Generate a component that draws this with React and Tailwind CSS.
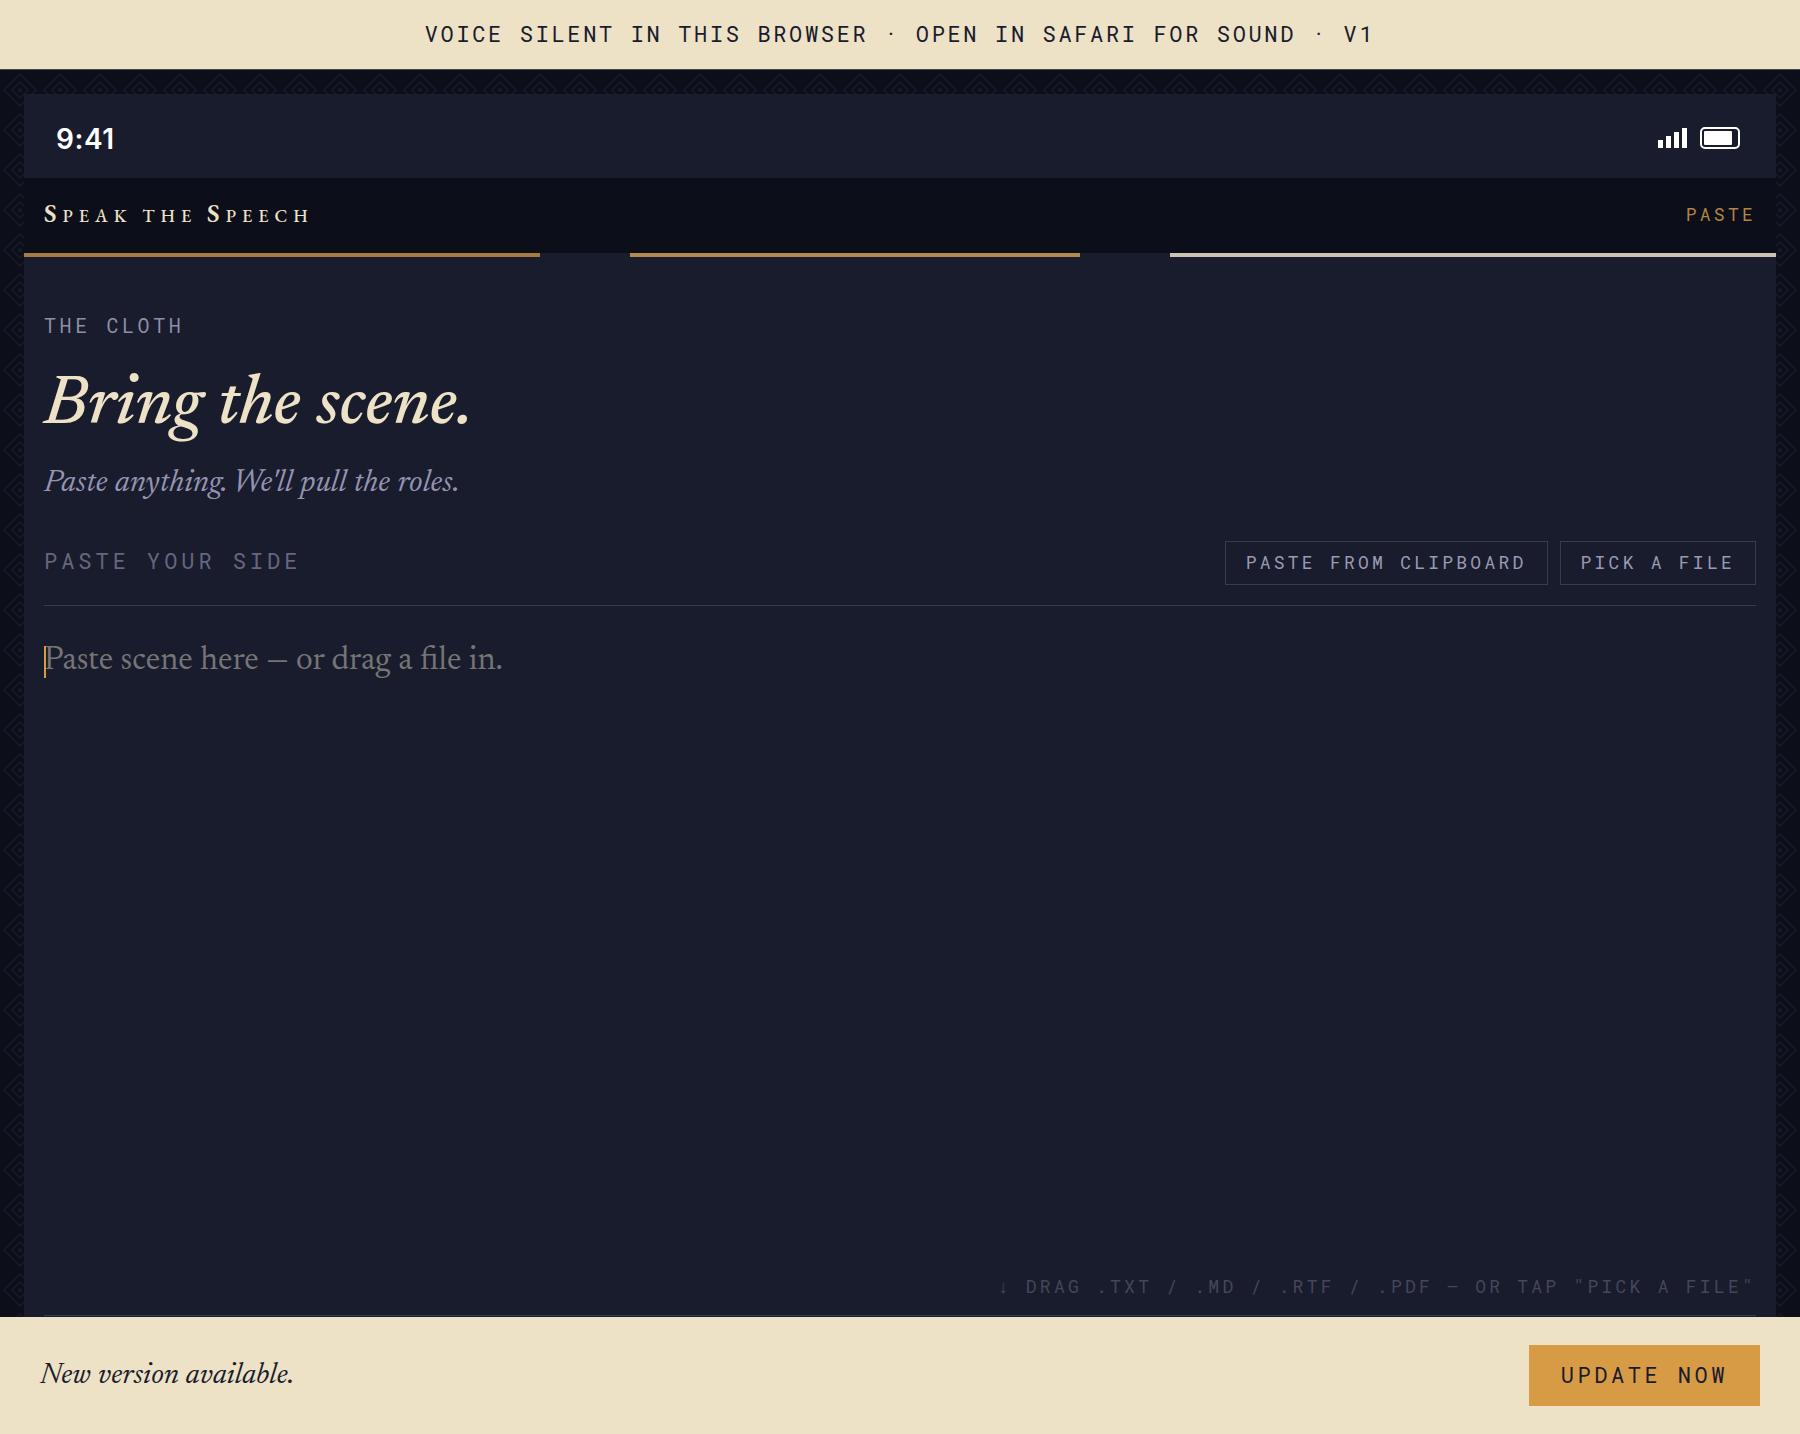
import { useState } from "react";

const MONO = "font-['Roboto_Mono','Liberation_Mono',monospace]";
const SERIF = "font-['Newsreader','Liberation_Serif',serif]";
const DISPLAY = "font-['EB_Garamond','Liberation_Serif',serif]";

function DiamondPattern() {
  return (
    <svg aria-hidden="true" className="absolute inset-0 w-full h-full">
      <defs>
        <pattern id="diamonds" width="40" height="40" patternUnits="userSpaceOnUse">
          <g fill="none" stroke="#181a28">
            <path d="M20 4 36 20 20 36 4 20Z" strokeWidth="1.5" />
            <path d="M20 12 28 20 20 28 12 20Z" strokeWidth="1.5" />
          </g>
          <circle cx="20" cy="20" r="2" fill="#181a28" />
        </pattern>
      </defs>
      <rect width="100%" height="100%" fill="url(#diamonds)" />
    </svg>
  );
}

function StatusBar() {
  return (
    <div className="h-[84px] pl-8 pr-9 pt-1 flex items-center justify-between text-white">
      <span className="pt-0.5 font-['Inter',sans-serif] font-semibold text-[28px] leading-8 tracking-[0.02em]">
        9:41
      </span>
      <svg width="82" height="22" viewBox="0 0 82 22" fill="currentColor" aria-hidden="true">
        <path d="M0 13h5v8H0zM8 9h5v12H8zM16 5h5v16h-5zM24 1h5v20h-5z" />
        <rect x="43" y="1" width="38" height="20" rx="4" fill="none" stroke="currentColor" strokeWidth="2" />
        <rect x="46" y="4" width="28" height="14" rx="1" />
      </svg>
    </div>
  );
}

function Wordmark() {
  return (
    <span
      className={`${DISPLAY} pb-0.5 font-medium text-[18px] leading-8 tracking-[6px] uppercase text-[#ede1c6]`}
    >
      <span className="text-[26px] font-semibold">S</span>peak the{" "}
      <span className="text-[26px] font-semibold">S</span>peech
    </span>
  );
}

function Selvedge() {
  return (
    <div className="h-1 grid grid-cols-[516fr_90fr_450fr_90fr_606fr]">
      <div className="bg-[#a47c43]" />
      <div />
      <div className="bg-[#b28a50]" />
      <div />
      <div className="bg-[#cac3b2]" />
    </div>
  );
}

function GhostButton({ children }) {
  return (
    <button
      type="button"
      className={`${MONO} h-11 px-5 pb-0.5 border border-[#3a3c4e] text-[18px] leading-6 tracking-[0.18em] uppercase text-[#9a9ab4] hover:text-[#ede1c6]`}
    >
      {children}
    </button>
  );
}

export default function App() {
  const [scene, setScene] = useState("");

  return (
    <div className="min-h-screen flex flex-col bg-[#0c0e1a]">
      <div
        role="status"
        className={`${MONO} h-[70px] pb-0.5 shrink-0 flex items-center justify-center bg-[#ede1c6] border-b border-[#4a4648] text-[22px] leading-8 tracking-[0.12em] uppercase text-[#191c2d]`}
      >
        Voice silent in this browser · Open in Safari for sound · V1
      </div>

      <div className="relative flex-1 flex flex-col px-6 pt-6">
        <DiamondPattern />
        <main className="relative flex-1 flex flex-col bg-[#191c2d]">
          <StatusBar />

          <header className="h-[75px] px-5 flex items-center justify-between bg-[#0c0e1a]">
            <Wordmark />
            <span className={`${MONO} pb-1 text-[18px] leading-6 tracking-[0.18em] uppercase text-[#b08546]`}>
              Paste
            </span>
          </header>
          <Selvedge />

          <div className="flex-1 flex flex-col px-5 pt-[54px] pb-px">
            <p className={`${MONO} text-[20px] leading-7 tracking-[0.18em] uppercase text-[#8f8fab]`}>
              The Cloth
            </p>
            <h1 className={`${SERIF} mt-8 italic font-medium text-[70px] leading-[72px] text-[#ede1c6]`}>
              Bring the scene.
            </h1>
            <p className={`${SERIF} mt-5 italic text-[32px] leading-10 text-[#9494b2]`}>
              Paste anything. We'll pull the roles.
            </p>

            <div className="mt-[38px] pb-5 flex items-center justify-between border-b border-[#3a3c4e]">
              <label
                htmlFor="scene"
                className={`${MONO} pb-1 text-[22px] leading-8 tracking-[0.18em] uppercase text-[#66667f]`}
              >
                Paste your side
              </label>
              <div className="flex gap-3">
                <GhostButton>Paste from clipboard</GhostButton>
                <GhostButton>Pick a file</GhostButton>
              </div>
            </div>

            <div className="relative flex-1 flex flex-col">
              {scene === "" && <span className="absolute left-0 top-10 w-0.5 h-8 bg-[#d89b45]" />}
              <textarea
                id="scene"
                value={scene}
                onChange={(e) => setScene(e.target.value)}
                placeholder="Paste scene here — or drag a file in."
                className={`${SERIF} flex-1 w-full pt-8 resize-none bg-transparent outline-none caret-[#d89b45] text-[33px] leading-[48px] text-[#ede1c6] placeholder:text-[#757575]`}
              />
            </div>

            <p
              className={`${MONO} pb-[17px] text-right text-[18px] leading-6 tracking-[0.18em] uppercase text-[#44465a] border-b border-[#3a3c4e]`}
            >
              ↓ Drag .txt / .md / .rtf / .pdf — or tap "Pick a file"
            </p>
          </div>
        </main>
      </div>

      <footer className="shrink-0 px-10 py-7 flex items-center justify-between bg-[#ede1c6]">
        <span className={`${SERIF} italic text-[30px] leading-8 text-[#191c2d]`}>
          New version available.
        </span>
        <button
          type="button"
          className={`${MONO} h-[61px] px-8 pb-0.5 bg-[#d89b45] text-[22px] leading-8 tracking-[0.16em] uppercase text-[#191c2d]`}
        >
          Update now
        </button>
      </footer>
    </div>
  );
}
